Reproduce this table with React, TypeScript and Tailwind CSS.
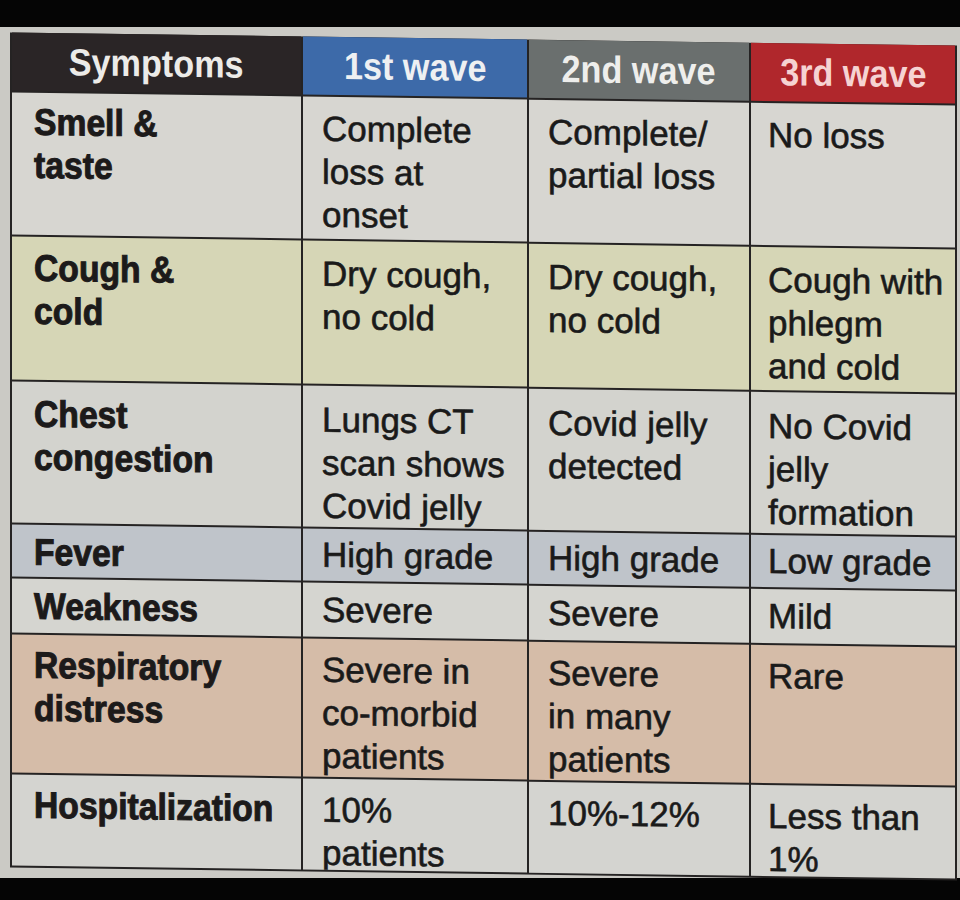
import React from "react";

type Row = {
  label: string[];
  cells: string[][];
  bg: string;
  lpt: string;
  bpt: string;
};

const rows: Row[] = [
  {
    label: ["Smell &", "taste"],
    cells: [["Complete", "loss at", "onset"], ["Complete/", "partial loss"], ["No loss"]],
    bg: "bg-[#d7d6d1]",
    lpt: "pt-[8px]",
    bpt: "pt-[10px]",
  },
  {
    label: ["Cough &", "cold"],
    cells: [["Dry cough,", "no cold"], ["Dry cough,", "no cold"], ["Cough with", "phlegm", "and cold"]],
    bg: "bg-[#d6d6b6]",
    lpt: "pt-[10px]",
    bpt: "pt-[11px]",
  },
  {
    label: ["Chest", "congestion"],
    cells: [["Lungs CT", "scan shows", "Covid jelly"], ["Covid jelly", "detected"], ["No Covid", "jelly", "formation"]],
    bg: "bg-[#d3d3ce]",
    lpt: "pt-[11px]",
    bpt: "pt-[12px]",
  },
  {
    label: ["Fever"],
    cells: [["High grade"], ["High grade"], ["Low grade"]],
    bg: "bg-[#bfc4ca]",
    lpt: "pt-[6px]",
    bpt: "pt-[4px]",
  },
  {
    label: ["Weakness"],
    cells: [["Severe"], ["Severe"], ["Mild"]],
    bg: "bg-[#d5d5d0]",
    lpt: "pt-[6px]",
    bpt: "pt-[5px]",
  },
  {
    label: ["Respiratory", "distress"],
    cells: [["Severe in", "co-morbid", "patients"], ["Severe", "in many", "patients"], ["Rare"]],
    bg: "bg-[#d5bca8]",
    lpt: "pt-[9px]",
    bpt: "pt-[9px]",
  },
  {
    label: ["Hospitalization"],
    cells: [["10%", "patients"], ["10%-12%"], ["Less than", "1%"]],
    bg: "bg-[#d4d4d0]",
    lpt: "pt-[9px]",
    bpt: "pt-[9px]",
  },
];

const cellPl = ["pl-[19px]", "pl-[19px]", "pl-[17px]"];

export default function App() {
  return (
    <div className="w-[960px] h-[900px] bg-black flex flex-col overflow-hidden font-['Liberation_Sans',Arial,sans-serif]">
      <div className="h-[27px] bg-[#050505]" />
      <div className="h-[851px] bg-[#cbcac5] pl-[10px] pt-[12px]">
        <div className="w-[947px] skew-y-[0.8deg] grid grid-cols-[289px_224px_220px_204px] grid-rows-[58px_142px_143px_141px_52px_54px_138px_91px] gap-[2px] bg-[#252323] px-[2px] pb-[2px]">
          <div className="bg-[#2a2526] flex items-center justify-center">
            <span className="inline-block scale-x-[0.9] text-[38px] leading-none font-bold text-[#ecebe8]">Symptoms</span>
          </div>
          <div className="bg-[#3d6aa9] flex items-center justify-center">
            <span className="inline-block scale-x-[0.9] text-[38px] leading-none font-bold text-[#eef0f2]">1st wave</span>
          </div>
          <div className="bg-[#6a6f6e] flex items-center justify-center">
            <span className="inline-block scale-x-[0.9] text-[38px] leading-none font-bold text-[#eeeeec]">2nd wave</span>
          </div>
          <div className="bg-[#b0272c] flex items-center justify-center">
            <span className="inline-block scale-x-[0.9] text-[38px] leading-none font-bold text-[#f6d3d2]">3rd wave</span>
          </div>
          {rows.map((r, i) => (
            <React.Fragment key={i}>
              <div className={`${r.bg} ${r.lpt} pl-[22px] overflow-hidden`}>
                <div className="inline-block origin-left scale-x-[0.91] text-[37px] leading-[43px] font-bold text-[#1c1a1a] whitespace-nowrap [-webkit-text-stroke:1px_#1c1a1a]">
                  {r.label.map((l, k) => (
                    <div key={k}>{l}</div>
                  ))}
                </div>
              </div>
              {r.cells.map((c, j) => (
                <div key={j} className={`${r.bg} ${r.bpt} ${cellPl[j]} overflow-hidden`}>
                  <div className="text-[35px] leading-[43px] text-[#1a1a1a] whitespace-nowrap [-webkit-text-stroke:0.6px_#1a1a1a]">
                    {c.map((l, k) => (
                      <div key={k}>{l}</div>
                    ))}
                  </div>
                </div>
              ))}
            </React.Fragment>
          ))}
        </div>
      </div>
      <div className="flex-1 bg-[#050505]" />
    </div>
  );
}
